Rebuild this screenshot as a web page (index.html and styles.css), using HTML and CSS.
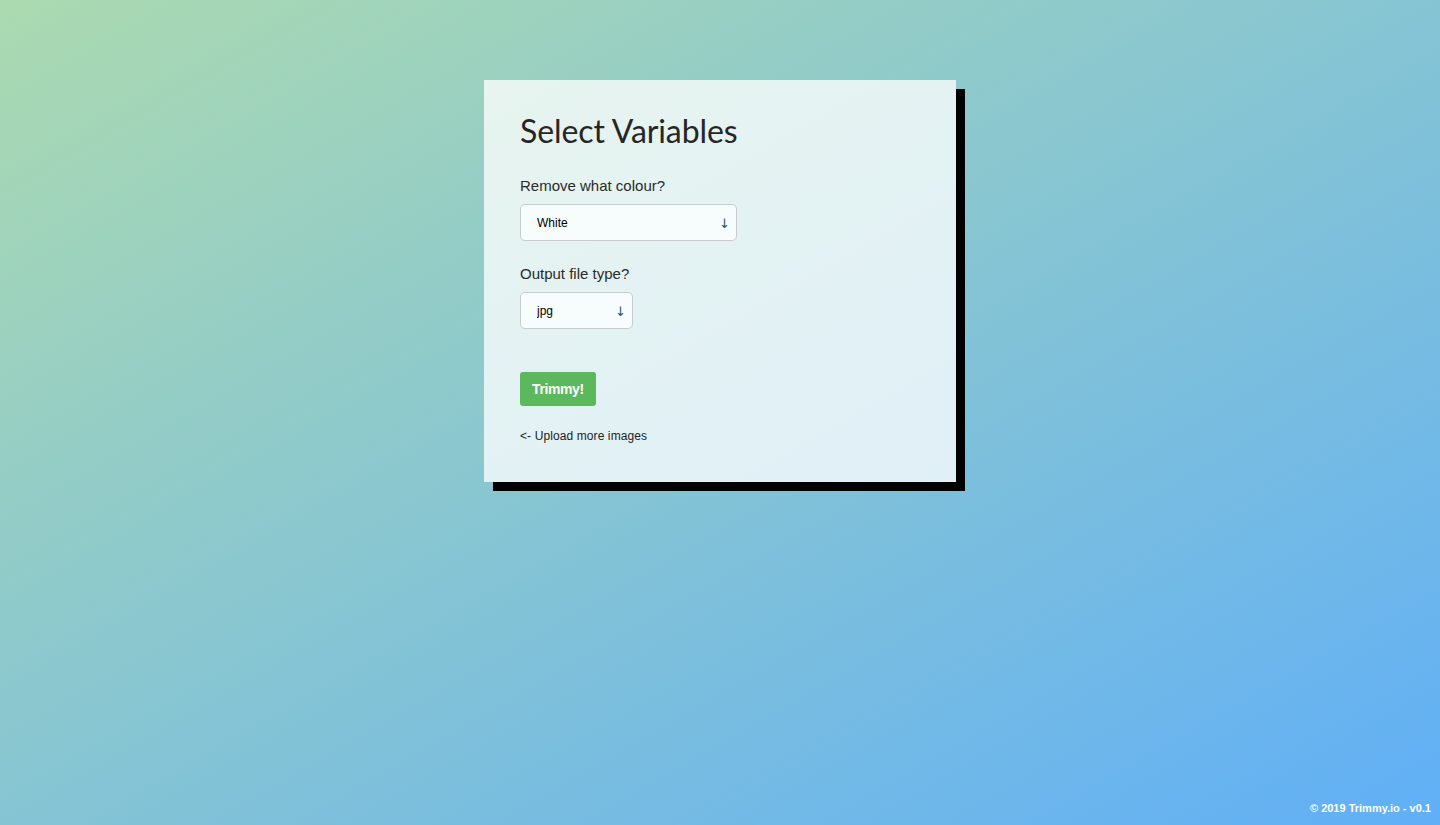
FILE: index.html
```html
<!DOCTYPE html>
<html lang="en">
<head>
<meta charset="utf-8">
<title>Trimmy.io - Select Variables</title>
<link rel="stylesheet" href="styles.css">
</head>
<body>
  <main class="page">
    <section class="card">
      <h1 class="title">Select Variables</h1>
      <div class="field">
        <label class="label" for="colour">Remove what colour?</label>
        <div class="select-wrap select-wide">
          <select id="colour" class="select">
            <option>White</option>
            <option>Black</option>
          </select>
          <span class="arrow">↓</span>
        </div>
      </div>
      <div class="field field-second">
        <label class="label" for="type">Output file type?</label>
        <div class="select-wrap select-narrow">
          <select id="type" class="select">
            <option>jpg</option>
            <option>png</option>
          </select>
          <span class="arrow">↓</span>
        </div>
      </div>
      <button class="btn" type="button">Trimmy!</button>
      <a class="back" href="#">&lt;- Upload more images</a>
    </section>
  </main>
  <footer class="footer">© 2019 Trimmy.io - v0.1</footer>
</body>
</html>
```
FILE: styles.css
```css
html, body {
  margin: 0;
  padding: 0;
}
body {
  min-height: 100vh;
  display: flex;
  flex-direction: column;
  background: linear-gradient(to bottom right, #abdab0, #60aff7);
  font-family: "Liberation Sans", Arial, sans-serif;
  color: #2b2b2b;
}
.page {
  flex: 1;
  display: flex;
  justify-content: center;
  align-items: flex-start;
  padding-top: 80px;
}
.card {
  width: 472px;
  height: 402px;
  box-sizing: border-box;
  padding: 31px 36px 38px;
  background: rgba(255, 255, 255, 0.76);
  box-shadow: 9px 9px 0 #000;
  display: flex;
  flex-direction: column;
  align-items: flex-start;
}
.title {
  margin: 0 0 25px;
  font-family: "Lato", "Liberation Sans", sans-serif;
  font-size: 32px;
  line-height: 40px;
  font-weight: 400;
  color: #262626;
  letter-spacing: -0.1px;
}
.field {
  display: flex;
  flex-direction: column;
  gap: 8px;
}
.field-second {
  margin-top: 23px;
}
.label {
  font-size: 15px;
  line-height: 20px;
  color: #2b2b2b;
}
.select-wrap {
  position: relative;
  height: 37px;
}
.select-wide { width: 217px; }
.select-narrow { width: 113px; }
.select {
  appearance: none;
  -webkit-appearance: none;
  width: 100%;
  height: 100%;
  box-sizing: border-box;
  margin: 0;
  border: 1px solid #c9cccd;
  border-radius: 5px;
  background: #f7fcfd;
  padding: 0 30px 0 16px;
  font-family: "Liberation Sans", Arial, sans-serif;
  font-size: 12px;
  color: #000;
}
.arrow {
  position: absolute;
  right: 7px;
  top: 50%;
  transform: translateY(-48%);
  font-family: "DejaVu Sans", sans-serif;
  font-size: 13px;
  color: #1d4f86;
  pointer-events: none;
}
.btn {
  margin-top: 43px;
  height: 34px;
  padding: 0 12px;
  border: none;
  border-radius: 3px;
  background: #5cb85c;
  color: #fff;
  font-family: "Liberation Sans", Arial, sans-serif;
  font-size: 14px;
  font-weight: 700;
  letter-spacing: -0.4px;
}
.back {
  margin-top: 22px;
  font-size: 12px;
  line-height: 16px;
  letter-spacing: 0.1px;
  color: #222;
  text-decoration: none;
}
.footer {
  text-align: right;
  padding: 0 9px 9px 0;
  font-size: 11px;
  line-height: 16px;
  font-weight: 700;
  color: #fff;
}
```
